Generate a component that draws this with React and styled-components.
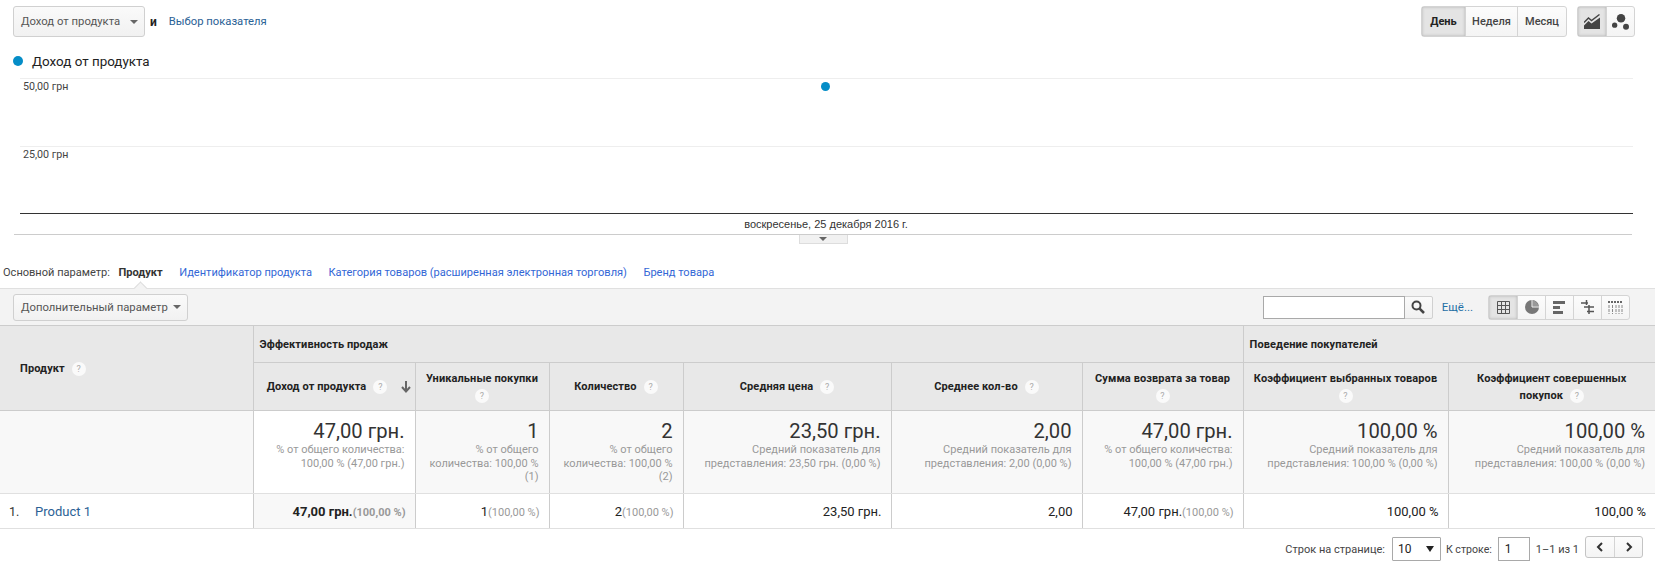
import React from 'react'
import styled, { createGlobalStyle, css } from 'styled-components'

const GlobalStyle = createGlobalStyle`
  html, body { margin: 0; padding: 0; background: #fff; }
  body { font-family: Roboto, "Liberation Sans", Arial, sans-serif; font-size: 11px; color: #333; }
`

const Page = styled.div`
  width: 1655px;
  height: 563px;
  overflow: hidden;
  position: relative;
`

const TopBar = styled.div`
  display: flex;
  align-items: center;
  height: 31px;
  padding: 6px 20px 0 13px;
`

const buttonFace = css`
  border: 1px solid #d0d0d0;
  border-radius: 3px;
  background: linear-gradient(#fafafa, #f1f1f1);
  box-sizing: border-box;
`

const Dropdown = styled.div`
  ${buttonFace}
  display: flex;
  align-items: center;
  justify-content: space-between;
  width: ${p => p.width}px;
  height: ${p => p.height}px;
  padding: 0 6px 0 7px;
  font-size: 11.3px;
  color: #555;
  white-space: nowrap;
`

const Caret = styled.span`
  width: 0;
  height: 0;
  border-left: 4px solid transparent;
  border-right: 4px solid transparent;
  border-top: 4px solid #666;
`

const AndLabel = styled.span`
  margin-left: 5px;
  font-weight: 700;
  font-size: 12px;
  color: #222;
`

const MetricLink = styled.a`
  margin-left: 12px;
  color: #2a6195;
  font-size: 11.25px;
`

const Spacer = styled.div`
  flex: 1;
`

const Group = styled.div`
  display: flex;
  margin-left: ${p => p.gap || 0}px;
  border: 1px solid #d4d4d4;
  border-radius: 3px;
  box-sizing: border-box;
  height: ${p => p.height}px;
  background: linear-gradient(#fcfcfc, #f4f4f4);
`

const GroupButton = styled.div`
  display: flex;
  align-items: center;
  justify-content: center;
  box-sizing: border-box;
  width: ${p => p.width}px;
  font-size: 11px;
  font-weight: 500;
  color: #444;
  & + & { border-left: 1px solid #d4d4d4; }
  ${p => p.active && css`
    background: #e4e4e4;
    box-shadow: inset 0 0 3px #b0b0b0;
    color: #222;
    font-weight: 700;
  `}
`

const Legend = styled.div`
  display: flex;
  align-items: center;
  height: 16px;
  margin-top: 16px;
  padding-left: 13px;
  font-size: 13.4px;
  color: #222;
`

const LegendDot = styled.span`
  width: 10px;
  height: 10px;
  border-radius: 50%;
  background: #058dc7;
  margin-right: 9px;
`

const Chart = styled.div`
  position: relative;
  margin: 9px 22px 0 20px;
`

const GridRow = styled.div`
  border-top: 1px solid #eee;
  padding: 1px 0 0 3px;
  font-size: 10.7px;
  line-height: 13px;
  color: #444;
  height: 65.5px;
`

const Baseline = styled.div`
  border-top: 1px solid #333;
`

const DataPoint = styled.span`
  position: absolute;
  left: 801px;
  top: 4px;
  width: 9px;
  height: 9px;
  border-radius: 50%;
  background: #058dc7;
`

const DateLabel = styled.div`
  text-align: center;
  font-family: "Liberation Sans", Arial, sans-serif;
  font-size: 11px;
  line-height: 20px;
  margin: 0 21px 0 18px;
  height: 20px;
  color: #333;
`

const CollapseRail = styled.div`
  display: flex;
  justify-content: center;
  margin: 0 23px 0 14px;
  border-top: 1px solid #ccc;
  height: 9px;
`

const CollapseTab = styled.div`
  display: flex;
  justify-content: center;
  padding-top: 2px;
  width: 49px;
  height: 9px;
  box-sizing: border-box;
  background: #f1f1f1;
  border: 1px solid #ddd;
  border-top: 0;
`

const PrimaryRow = styled.div`
  display: flex;
  align-items: center;
  gap: 16.5px;
  height: 44px;
  padding: 12px 0 0 3px;
  box-sizing: border-box;
  font-size: 11.06px;
`

const PrimaryLabel = styled.span`
  color: #444;
  margin-right: -8px;
`

const PrimaryActive = styled.span`
  position: relative;
  font-weight: 700;
  color: #333;
  &::after {
    content: '';
    position: absolute;
    left: 18px;
    bottom: -9px;
    width: 8px;
    height: 8px;
    transform: rotate(45deg) translate(3px, 3px);
    background: #f3f3f3;
    border-left: 1px solid #ddd;
    border-top: 1px solid #ddd;
  }
`

const PrimaryLink = styled.a`
  color: #3367d6;
`

const Toolbar = styled.div`
  display: flex;
  align-items: center;
  height: 37px;
  box-sizing: border-box;
  padding: 0 25px 0 13px;
  background: #f3f3f3;
  border-top: 1px solid #e0e0e0;
`

const Search = styled.div`
  display: flex;
  height: 23px;
  box-sizing: border-box;
  border: 1px solid #d0d0d0;
  border-radius: 0 2px 2px 0;
  background: linear-gradient(#fafafa, #f1f1f1);
`

const SearchInput = styled.div`
  width: 140px;
  margin: -1px 0 -1px -1px;
  background: #fff;
  border: 1px solid #a9a9a9;
  box-sizing: content-box;
  height: 21px;
`

const SearchButton = styled.div`
  display: flex;
  align-items: center;
  justify-content: center;
  width: 27px;
`

const MoreLink = styled.a`
  margin: 0 15px 0 9px;
  font-size: 11.5px;
  color: #1f6fa5;
`

const Table = styled.table`
  width: 1655px;
  table-layout: fixed;
  border-collapse: collapse;
`

const HeadCell = styled.th`
  background: #e8e8e8;
  border: 1px solid #ccc;
  border-left-width: ${p => p.first ? 0 : 1}px;
  border-right-width: ${p => p.last ? 0 : 1}px;
  padding: 0 ${p => p.sorted ? 19 : 5}px 0 ${p => p.inset || 5}px;
  height: ${p => p.height}px;
  box-sizing: border-box;
  font-size: 11px;
  line-height: 17px;
  font-weight: 700;
  color: #222;
  text-align: ${p => p.align || 'center'};
  position: relative;
  letter-spacing: 0.1px;
`

const Help = styled.span`
  display: inline-block;
  width: 14px;
  height: 14px;
  margin-left: 7px;
  border-radius: 50%;
  background: #fafafa;
  color: #aaa;
  font-size: 9px;
  font-weight: 400;
  line-height: 14px;
  text-align: center;
  vertical-align: middle;
`

const HelpOnly = styled(Help)`
  margin-left: 0;
`

const SortArrow = styled.span`
  position: absolute;
  right: 4px;
  top: 18px;
  display: flex;
`

const TotalCell = styled.td`
  background: ${p => p.sorted ? '#fff' : '#f8f8f8'};
  border: 1px solid #ccc;
  border-bottom: 1px solid #e0e0e0;
  border-left-width: ${p => p.first ? 0 : 1}px;
  border-right-width: ${p => p.last ? 0 : 1}px;
  height: 83px;
  box-sizing: border-box;
  padding: 8px 10px 0 5px;
  text-align: right;
  vertical-align: top;
`

const BigValue = styled.div`
  font-size: 20.2px;
  line-height: 24px;
  color: #333;
`

const TotalNote = styled.div`
  font-size: 11px;
  line-height: 13.5px;
  color: #999;
`

const DataCell = styled.td`
  background: ${p => p.sorted ? '#f8f8f8' : '#fff'};
  border: 1px solid #ccc;
  border-top: 0;
  border-bottom: 1px solid #e0e0e0;
  border-left-width: ${p => p.first ? 0 : 1}px;
  border-right-width: ${p => p.last ? 0 : 1}px;
  height: 35px;
  box-sizing: border-box;
  padding: 0 9px 0 5px;
  font-size: 13px;
  color: #222;
  text-align: right;
  ${p => p.first && css`text-align: left; padding-left: 9px;`}
  ${p => p.sorted && css`font-weight: 700;`}
`

const RowNumber = styled.span`
  display: inline-block;
  width: 26px;
  font-size: 12.5px;
  color: #333;
`

const ProductLink = styled.a`
  font-size: 13px;
  color: #2a6195;
`

const Share = styled.span`
  font-size: 11px;
  font-weight: ${p => p.bold ? 700 : 400};
  color: #999;
`

const Footer = styled.div`
  display: flex;
  align-items: center;
  justify-content: flex-end;
  height: 24px;
  margin-top: 8px;
  padding-right: 12px;
  font-size: 11px;
  color: #444;
`

const PageSelect = styled.div`
  display: flex;
  align-items: center;
  justify-content: space-between;
  box-sizing: border-box;
  width: 49px;
  height: 24px;
  margin: 0 5px 0 7px;
  padding: 0 6px 0 5px;
  border: 1px solid #a9a9a9;
  border-radius: 1px;
  color: #222;
  font-size: 12px;
`

const DarkCaret = styled.span`
  width: 0;
  height: 0;
  border-left: 4px solid transparent;
  border-right: 4px solid transparent;
  border-top: 6px solid #222;
`

const PagerLabel = styled.span`
  font-size: 10.6px;
`

const RowInput = styled.div`
  display: flex;
  align-items: center;
  box-sizing: border-box;
  width: 32px;
  height: 24px;
  margin: 0 6px;
  padding-left: 6px;
  border: 1px solid #a9a9a9;
  color: #222;
  font-size: 12px;
`

const NavGroup = styled(Group)`
  margin-left: 6px;
  margin-top: -4px;
  border-color: #c4c4c4;
`

const Icon = styled.svg`
  display: block;
`

const LineIcon = () => (
  <Icon width="16" height="15" viewBox="0 0 16 15">
    <path d="M0 8.5 L4.5 4 L7.5 6.5 L15.5 0.5" fill="none" stroke="#444" strokeWidth="1.4" />
    <path d="M0 15 V11.5 L4.5 7 L7.5 9.5 L16 3.5 V15 Z" fill="#444" />
  </Icon>
)

const ScatterIcon = () => (
  <Icon width="17" height="16" viewBox="0 0 16 15">
    <circle cx="8.5" cy="4" r="4" fill="#444" />
    <circle cx="2.5" cy="10.5" r="2.5" fill="#444" />
    <circle cx="13.2" cy="12" r="2.8" fill="#444" />
  </Icon>
)

const SearchIcon = () => (
  <Icon width="14" height="14" viewBox="0 0 14 14">
    <circle cx="5.5" cy="5.5" r="4" fill="none" stroke="#444" strokeWidth="2" />
    <path d="M8.6 8.6 L13 13" stroke="#444" strokeWidth="2.6" />
  </Icon>
)

const TableIcon = () => (
  <Icon width="13" height="13" viewBox="0 0 13 13">
    <path d="M.5 .5H12.5V12.5H.5ZM4.5 .5V12.5M8.5 .5V12.5M.5 4.5H12.5M.5 8.5H12.5" fill="none" stroke="#555" />
  </Icon>
)

const PieIcon = () => (
  <Icon width="14" height="14" viewBox="0 0 14 14">
    <circle cx="7" cy="7" r="7" fill="#777" />
    <path d="M7.5 .5V6.5H13.5A6.5 6.5 0 0 0 7.5 .5Z" fill="#999" />
    <path d="M7 0V7H14" fill="none" stroke="#f4f4f4" />
  </Icon>
)

const BarsIcon = () => (
  <Icon width="13" height="13" viewBox="0 0 13 13">
    <path d="M0 0H12V3H0ZM0 5H7V8H0ZM0 10H10V13H0Z" fill="#666" />
  </Icon>
)

const PivotIcon = () => (
  <Icon width="13" height="14" viewBox="0 0 13 14">
    <path d="M0 3H7M3 7H13M6 11.5H13M5.5 0V5M8 5V14" fill="none" stroke="#555" strokeWidth="1.5" />
  </Icon>
)

const CompareIcon = () => (
  <Icon width="15" height="13" viewBox="0 0 15 13">
    <path d="M0 1H15" stroke="#666" strokeWidth="2" strokeDasharray="2 1" />
    <path d="M1 4V13M4.5 4V13M8 4V13M11 4V13M14 4V13" stroke="#888" strokeDasharray="3 1" />
  </Icon>
)

const ChevronLeft = () => (
  <Icon width="8" height="10" viewBox="0 0 8 10">
    <path d="M6 1 L2 5 L6 9" fill="none" stroke="#333" strokeWidth="2" />
  </Icon>
)

const ChevronRight = () => (
  <Icon width="8" height="10" viewBox="0 0 8 10">
    <path d="M2 1 L6 5 L2 9" fill="none" stroke="#333" strokeWidth="2" />
  </Icon>
)

const DownArrow = () => (
  <Icon width="10" height="12" viewBox="0 0 10 12">
    <path d="M5 0V10M1 6L5 10.5L9 6" fill="none" stroke="#666" strokeWidth="2" />
  </Icon>
)

const columnWidths = [253, 162, 134, 134, 208, 191, 161, 205, 207]

// helpBelow puts the help mark on its own line, tail is what wraps down with it
const subHeaders = [
  { label: 'Доход от продукта', sorted: true },
  { label: 'Уникальные покупки', helpBelow: true },
  { label: 'Количество' },
  { label: 'Средняя цена' },
  { label: 'Среднее кол-во' },
  { label: 'Сумма возврата за товар', helpBelow: true },
  { label: 'Коэффициент выбранных товаров', helpBelow: true },
  { label: 'Коэффициент совершенных', tail: 'покупок', last: true }
]

const totals = [
  { value: '47,00 грн.', note: '% от общего количества: 100,00 % (47,00 грн.)', sorted: true },
  { value: '1', note: '% от общего количества: 100,00 % (1)' },
  { value: '2', note: '% от общего количества: 100,00 % (2)' },
  { value: '23,50 грн.', note: 'Средний показатель для представления: 23,50 грн. (0,00 %)' },
  { value: '2,00', note: 'Средний показатель для представления: 2,00 (0,00 %)' },
  { value: '47,00 грн.', note: '% от общего количества: 100,00 % (47,00 грн.)' },
  { value: '100,00 %', note: 'Средний показатель для представления: 100,00 % (0,00 %)' },
  { value: '100,00 %', note: 'Средний показатель для представления: 100,00 % (0,00 %)', last: true }
]

const rowCells = [
  { value: '47,00 грн.', share: '(100,00 %)', sorted: true },
  { value: '1', share: '(100,00 %)' },
  { value: '2', share: '(100,00 %)' },
  { value: '23,50 грн.' },
  { value: '2,00' },
  { value: '47,00 грн.', share: '(100,00 %)' },
  { value: '100,00 %' },
  { value: '100,00 %', last: true }
]

const AnalyticsTable = () => (
  <Table>
    <colgroup>
      {columnWidths.map((w, i) => <col key={i} width={w} />)}
    </colgroup>
    <thead>
      <tr>
        <HeadCell first rowSpan={2} align="left" inset={20}>
          Продукт<Help>?</Help>
        </HeadCell>
        <HeadCell colSpan={6} height={37} align="left" inset={6}>Эффективность продаж</HeadCell>
        <HeadCell colSpan={2} last height={37} align="left" inset={6}>Поведение покупателей</HeadCell>
      </tr>
      <tr>
        {subHeaders.map(({ label, tail, helpBelow, sorted, last }) => (
          <HeadCell key={label} last={last} sorted={sorted} height={48}>
            {label}
            {helpBelow && <><br /><HelpOnly>?</HelpOnly></>}
            {tail && <><br />{tail}</>}
            {!helpBelow && <Help>?</Help>}
            {sorted && <SortArrow><DownArrow /></SortArrow>}
          </HeadCell>
        ))}
      </tr>
    </thead>
    <tbody>
      <tr>
        <TotalCell first />
        {totals.map(({ value, note, sorted, last }, i) => (
          <TotalCell key={i} sorted={sorted} last={last}>
            <BigValue>{value}</BigValue>
            <TotalNote>{note}</TotalNote>
          </TotalCell>
        ))}
      </tr>
      <tr>
        <DataCell first>
          <RowNumber>1.</RowNumber>
          <ProductLink>Product 1</ProductLink>
        </DataCell>
        {rowCells.map(({ value, share, sorted, last }, i) => (
          <DataCell key={i} sorted={sorted} last={last}>
            {value}{share && <Share bold={sorted}>{share}</Share>}
          </DataCell>
        ))}
      </tr>
    </tbody>
  </Table>
)

export default function App() {
  return (
    <Page>
      <GlobalStyle />
      <TopBar>
        <Dropdown width={132} height={31}>
          Доход от продукта <Caret />
        </Dropdown>
        <AndLabel>и</AndLabel>
        <MetricLink>Выбор показателя</MetricLink>
        <Spacer />
        <Group height={31}>
          <GroupButton active width={43}>День</GroupButton>
          <GroupButton width={52}>Неделя</GroupButton>
          <GroupButton width={49}>Месяц</GroupButton>
        </Group>
        <Group gap={10} height={31}>
          <GroupButton active width={28}><LineIcon /></GroupButton>
          <GroupButton width={28}><ScatterIcon /></GroupButton>
        </Group>
      </TopBar>

      <Legend><LegendDot />Доход от продукта</Legend>

      <Chart>
        <GridRow>50,00 грн</GridRow>
        <GridRow>25,00 грн</GridRow>
        <Baseline />
        <DataPoint />
      </Chart>
      <DateLabel>воскресенье, 25 декабря 2016 г.</DateLabel>
      <CollapseRail>
        <CollapseTab><Caret /></CollapseTab>
      </CollapseRail>

      <PrimaryRow>
        <PrimaryLabel>Основной параметр:</PrimaryLabel>
        <PrimaryActive>Продукт</PrimaryActive>
        <PrimaryLink>Идентификатор продукта</PrimaryLink>
        <PrimaryLink>Категория товаров (расширенная электронная торговля)</PrimaryLink>
        <PrimaryLink>Бренд товара</PrimaryLink>
      </PrimaryRow>

      <Toolbar>
        <Dropdown width={175} height={27}>
          Дополнительный параметр <Caret />
        </Dropdown>
        <Spacer />
        <Search>
          <SearchInput />
          <SearchButton><SearchIcon /></SearchButton>
        </Search>
        <MoreLink>Ещё...</MoreLink>
        <Group height={25}>
          <GroupButton active width={28}><TableIcon /></GroupButton>
          <GroupButton width={28}><PieIcon /></GroupButton>
          <GroupButton width={28}><BarsIcon /></GroupButton>
          <GroupButton width={28}><PivotIcon /></GroupButton>
          <GroupButton width={28}><CompareIcon /></GroupButton>
        </Group>
      </Toolbar>

      <AnalyticsTable />

      <Footer>
        Строк на странице:
        <PageSelect>10 <DarkCaret /></PageSelect>
        <PagerLabel>К строке:</PagerLabel>
        <RowInput>1</RowInput>
        1–1 из 1
        <NavGroup height={22}>
          <GroupButton width={28}><ChevronLeft /></GroupButton>
          <GroupButton width={28}><ChevronRight /></GroupButton>
        </NavGroup>
      </Footer>
    </Page>
  )
}
